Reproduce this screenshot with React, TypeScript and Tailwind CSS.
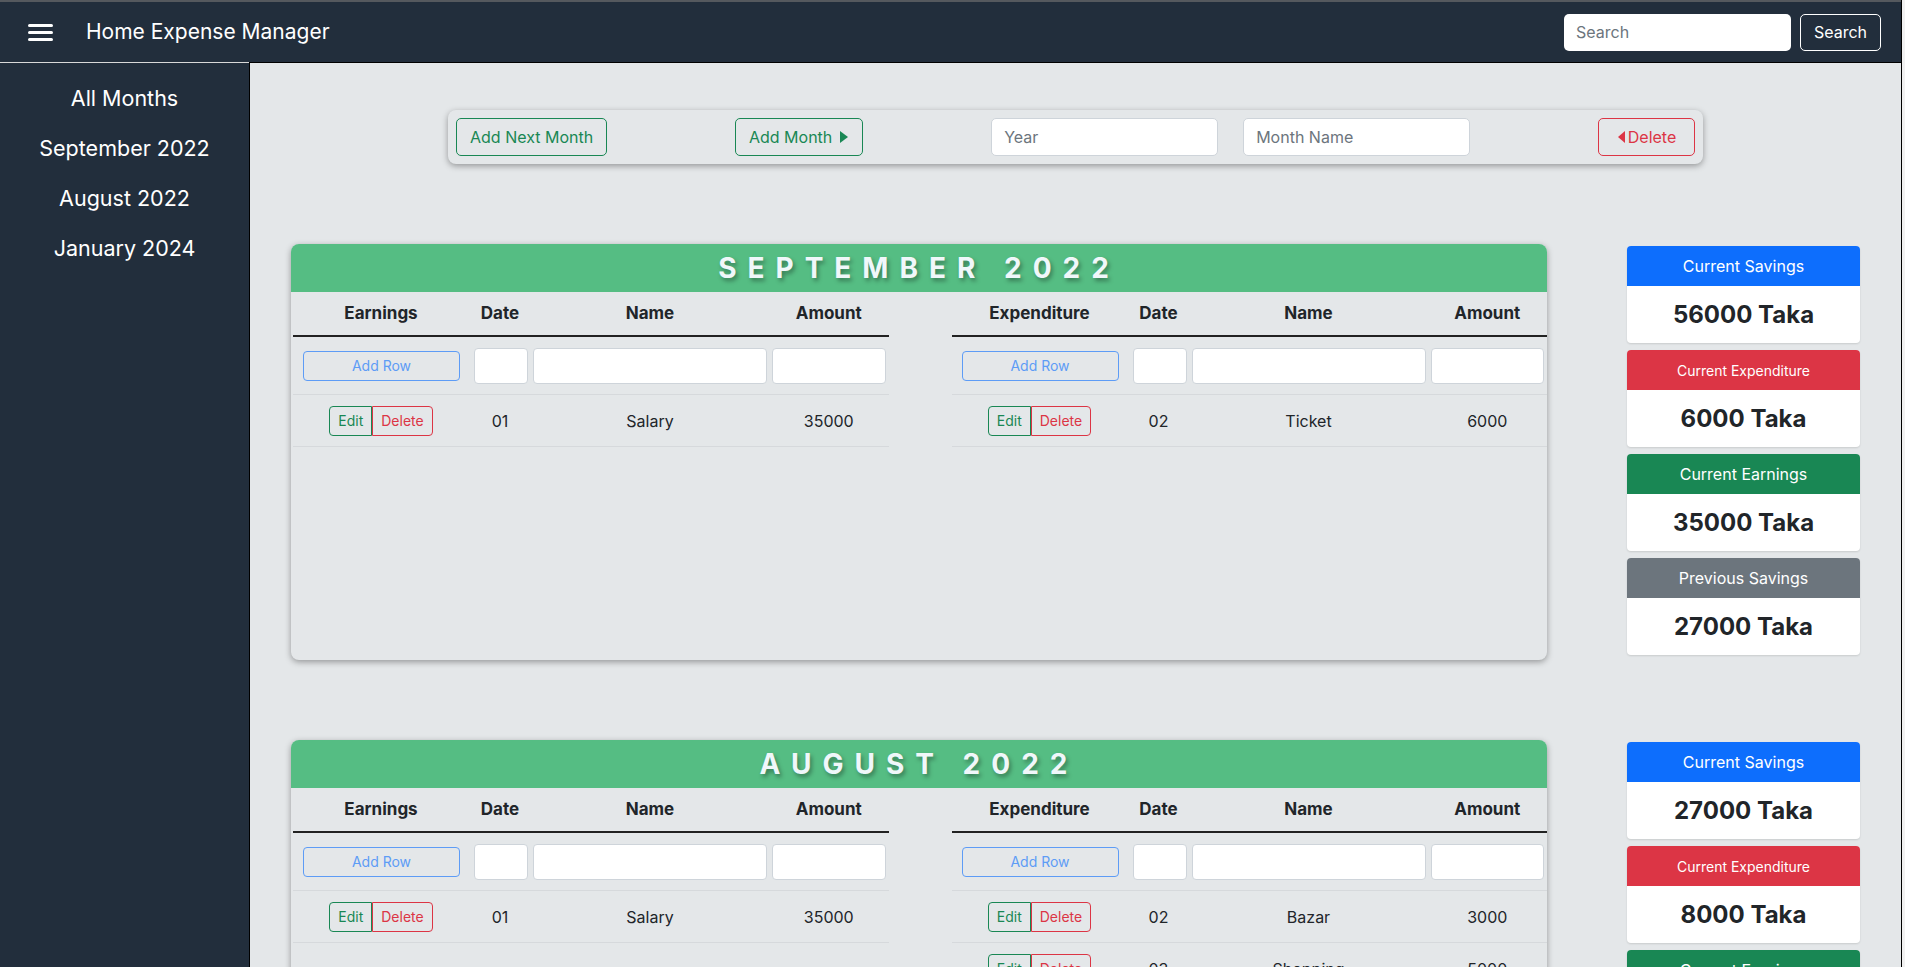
type Row = { date: string; name: string; amount: string };

type MonthData = {
  title: string;
  earnings: Row[];
  expenditure: Row[];
  savings: string;
  spent: string;
  earned: string;
  previous: string;
};

const months: MonthData[] = [
  {
    title: "SEPTEMBER 2022",
    earnings: [{ date: "01", name: "Salary", amount: "35000" }],
    expenditure: [{ date: "02", name: "Ticket", amount: "6000" }],
    savings: "56000",
    spent: "6000",
    earned: "35000",
    previous: "27000",
  },
  {
    title: "AUGUST 2022",
    earnings: [{ date: "01", name: "Salary", amount: "35000" }],
    expenditure: [
      { date: "02", name: "Bazar", amount: "3000" },
      { date: "03", name: "Shopping", amount: "5000" },
    ],
    savings: "27000",
    spent: "8000",
    earned: "35000",
    previous: "0",
  },
];

const sideLinks = ["All Months", "September 2022", "August 2022", "January 2024"];

function LedgerTable({ label, rows }: { label: string; rows: Row[] }) {
  const cols = "grid grid-cols-[176px_62px_238px_1fr]";
  return (
    <div>
      <div className={`${cols} h-[45px] items-center border-b-2 border-[#222] text-center font-bold text-[17px] text-[#212529]`}>
        <div>{label}</div>
        <div>Date</div>
        <div>Name</div>
        <div>Amount</div>
      </div>
      <div className={`${cols} h-[58px] items-center border-b border-[#d6d9dc]`}>
        <div className="pl-[10px] pr-[9px]">
          <button className="w-full h-[30px] border border-[#5d9cf6] rounded-[4px] text-[14px] text-[#5d9cf6]">
            Add Row
          </button>
        </div>
        <div className="pl-[5px] pr-[3px]">
          <input className="w-full h-[36px] bg-white border border-[#ced4da] rounded-[4px]" />
        </div>
        <div className="px-[2px]">
          <input className="w-full h-[36px] bg-white border border-[#ced4da] rounded-[4px]" />
        </div>
        <div className="px-[3px]">
          <input className="w-full h-[36px] bg-white border border-[#ced4da] rounded-[4px]" />
        </div>
      </div>
      {rows.map((r, i) => (
        <div
          key={i}
          className={`${cols} h-[52px] items-center border-b border-[#d6d9dc] text-center text-[16px] text-[#212529]`}
        >
          <div className="flex justify-center">
            <div className="flex h-[30px] text-[14px]">
              <button className="px-[8px] border border-[#198754] rounded-l-[4px] text-[#198754]">Edit</button>
              <button className="px-[8px] border border-[#dc3545] rounded-r-[4px] text-[#dc3545]">Delete</button>
            </div>
          </div>
          <div>{r.date}</div>
          <div>{r.name}</div>
          <div>{r.amount}</div>
        </div>
      ))}
    </div>
  );
}

function StatCard({ title, value, head, small }: { title: string; value: string; head: string; small?: boolean }) {
  return (
    <div className="rounded-[4px] overflow-hidden bg-white shadow-[0_1px_2px_rgba(0,0,0,0.12)]">
      <div className={`h-[40px] flex items-center justify-center text-white ${head} ${small ? "text-[14px]" : "text-[16px]"}`}>
        {title}
      </div>
      <div className="h-[57px] flex items-center justify-center text-[24px] font-bold text-[#212529]">
        {value} Taka
      </div>
    </div>
  );
}

function MonthSection({ m }: { m: MonthData }) {
  return (
    <div className="flex gap-[80px] px-[41px] mb-[79px]">
      <div className="flex-1 min-h-[416px] mt-[1px] rounded-lg bg-[#e4e7e9] shadow-[0_2px_6px_rgba(0,0,0,0.35)]">
        <div className="h-[48px] rounded-t-lg bg-[#55bd83] flex items-center justify-center">
          <h2 className="text-[28px] font-bold tracking-[11px] text-[#f0f7fa] [text-shadow:2px_3px_4px_rgba(0,0,0,0.35)]">
            {m.title}
          </h2>
        </div>
        <div className="grid grid-cols-2 gap-[63px] pl-[2px]">
          <LedgerTable label="Earnings" rows={m.earnings} />
          <LedgerTable label="Expenditure" rows={m.expenditure} />
        </div>
      </div>
      <div className="w-[233px] pt-[3px] flex flex-col gap-[7px]">
        <StatCard title="Current Savings" value={m.savings} head="bg-[#0d6efd]" />
        <StatCard title="Current Expenditure" value={m.spent} head="bg-[#dc3545]" small />
        <StatCard title="Current Earnings" value={m.earned} head="bg-[#198754]" />
        <StatCard title="Previous Savings" value={m.previous} head="bg-[#6c757d]" />
      </div>
    </div>
  );
}

export default function App() {
  return (
    <div className="flex min-h-screen font-['Inter','Noto_Sans',sans-serif]">
      <div className="flex-1 flex flex-col">
        {/* top bar */}
        <nav className="h-[62px] bg-[#222e3c] border-t-2 border-[#55595e] flex items-center pl-[28px] pr-[20px]">
          <button className="flex flex-col gap-[4px] w-[25px]">
            <span className="h-[3px] bg-white rounded-sm" />
            <span className="h-[3px] bg-white rounded-sm" />
            <span className="h-[3px] bg-white rounded-sm" />
          </button>
          <span className="ml-[33px] text-[21px] text-white">Home Expense Manager</span>
          <div className="ml-auto flex items-center gap-[9px]">
            <input
              placeholder="Search"
              className="w-[227px] h-[37px] px-3 bg-white rounded-[5px] text-[16px] placeholder:text-[#6c757d]"
            />
            <button className="w-[81px] h-[37px] border border-white rounded-[5px] text-white text-[16px]">
              Search
            </button>
          </div>
        </nav>

        <div className="flex flex-1">
          {/* sidebar */}
          <aside className="w-[249px] shrink-0 bg-[#222e3c] border-t border-[#d9d9d9] pt-[10px]">
            {sideLinks.map((s) => (
              <div key={s} className="h-[50px] flex items-center justify-center text-white text-[21.5px]">
                {s}
              </div>
            ))}
          </aside>

          <main className="flex-1 bg-[#e4e7e9] border-t border-l border-black pt-[47px]">
            {/* toolbar */}
            <div className="w-[1255px] h-[54px] mx-auto mb-[79px] px-2 flex items-center justify-between rounded-lg bg-[#e4e7e9] shadow-[0_2px_6px_rgba(0,0,0,0.35)] text-[16px]">
              <button className="h-[38px] px-[13px] border border-[#198754] rounded-[5px] text-[#198754]">
                Add Next Month
              </button>
              <button className="h-[38px] px-[13px] border border-[#198754] rounded-[5px] text-[#198754] flex items-center gap-[7px]">
                Add Month
                <svg width="10" height="14" viewBox="0 0 10 14">
                  <path d="M1 1 L9 7 L1 13 Z" fill="#198754" />
                </svg>
              </button>
              <div className="flex gap-[25px]">
                <input
                  placeholder="Year"
                  className="w-[227px] h-[38px] px-3 bg-white border border-[#ced4da] rounded-[5px] placeholder:text-[#6c757d]"
                />
                <input
                  placeholder="Month Name"
                  className="w-[227px] h-[38px] px-3 bg-white border border-[#ced4da] rounded-[5px] placeholder:text-[#6c757d]"
                />
              </div>
              <button className="h-[38px] w-[97px] border border-[#dc3545] rounded-[5px] text-[#dc3545] flex items-center justify-center gap-[2px]">
                <svg width="9" height="14" viewBox="0 0 9 14">
                  <path d="M8 1 L1 7 L8 13 Z" fill="#dc3545" />
                </svg>
                Delete
              </button>
            </div>

            {months.map((m) => (
              <MonthSection key={m.title} m={m} />
            ))}
          </main>
        </div>
      </div>
      <div className="w-[4px] shrink-0 bg-[#f1f1f1] border-l border-black" />
    </div>
  );
}
